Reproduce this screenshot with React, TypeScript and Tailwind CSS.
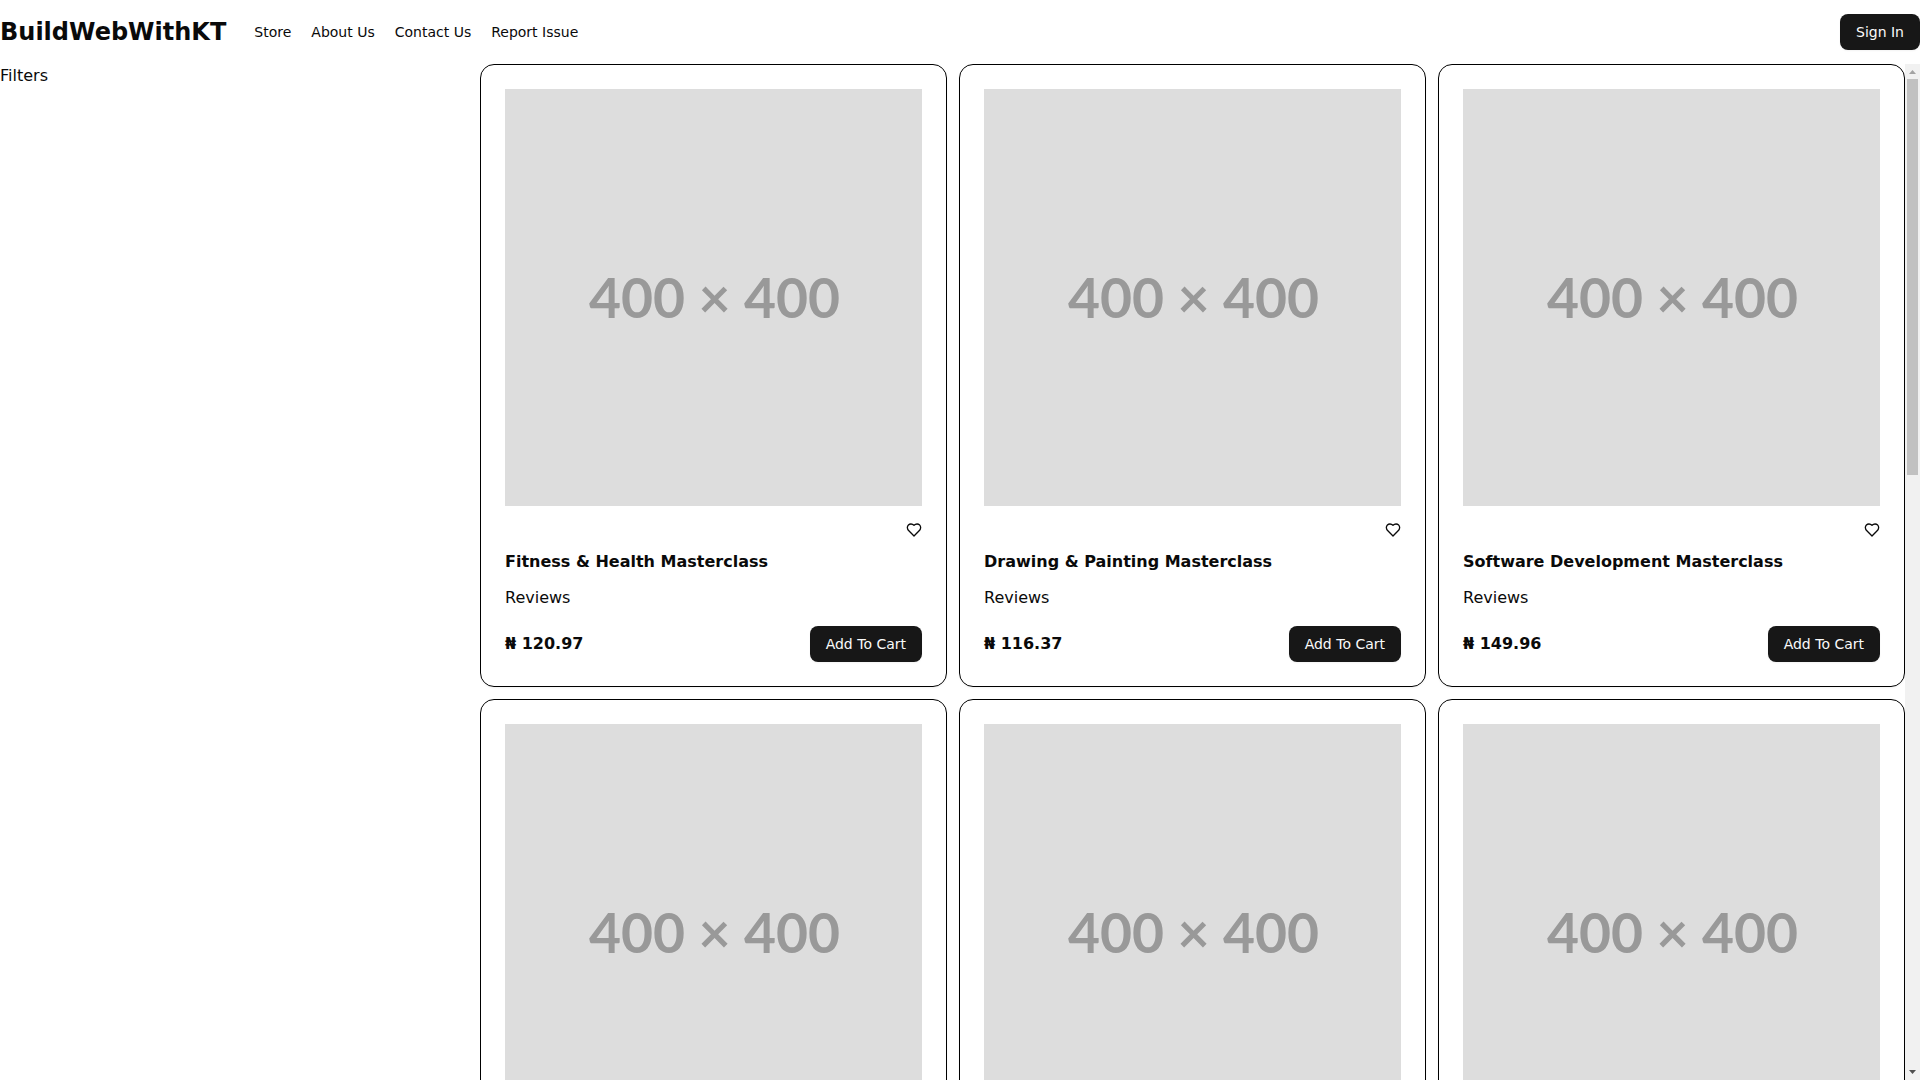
import React, { useState } from 'react';

const navLinks = ['Store', 'About Us', 'Contact Us', 'Report Issue'];

const courses = [
  { id: 1, title: 'Fitness & Health Masterclass', price: '120.97' },
  { id: 2, title: 'Drawing & Painting Masterclass', price: '116.37' },
  { id: 3, title: 'Software Development Masterclass', price: '149.96' },
  { id: 4, title: 'Fitness & Health Masterclass', price: '120.97' },
  { id: 5, title: 'Drawing & Painting Masterclass', price: '116.37' },
  { id: 6, title: 'Software Development Masterclass', price: '149.96' }
];

type Course = (typeof courses)[number];

const PrimaryButton = ({ children }: { children: React.ReactNode }) => (
  <button
    type="button"
    className="h-9 px-4 rounded-lg bg-[#171717] text-sm text-neutral-50 whitespace-nowrap shadow-xs hover:bg-[#171717]/90"
  >
    {children}
  </button>
);

const Placeholder = () => (
  <svg viewBox="0 0 400 400" className="block w-full bg-[#dddddd]" role="img" aria-label="400 × 400">
    <text
      x="201"
      y="220"
      textAnchor="middle"
      className="fill-[#999999] font-['Lato',sans-serif] text-[53px] font-bold"
    >
      400 × 400
    </text>
  </svg>
);

const CourseCard = ({ course }: { course: Course }) => {
  const [liked, setLiked] = useState(false);

  return (
    <article className="rounded-[14px] border border-black p-6 shadow-xs">
      <Placeholder />
      <div className="mt-4 flex justify-end">
        <button type="button" aria-label="Add to wishlist" aria-pressed={liked} onClick={() => setLiked(!liked)}>
          <svg
            viewBox="0 0 24 24"
            className="block size-4"
            fill={liked ? 'currentColor' : 'none'}
            stroke="currentColor"
            strokeWidth="2"
            strokeLinecap="round"
            strokeLinejoin="round"
          >
            <path d="M19 14c1.49-1.46 3-3.21 3-5.5A5.5 5.5 0 0 0 16.5 3c-1.76 0-3 .5-4.5 2-1.5-1.5-2.74-2-4.5-2A5.5 5.5 0 0 0 2 8.5c0 2.3 1.5 4.05 3 5.5l7 7Z" />
          </svg>
        </button>
      </div>
      <h2 className="mt-3 font-bold">{course.title}</h2>
      <p className="mt-3">Reviews</p>
      <div className="mt-4 flex items-center justify-between">
        <p className="font-bold">₦ {course.price}</p>
        <PrimaryButton>Add To Cart</PrimaryButton>
      </div>
    </article>
  );
};

const Scrollbar = () => (
  <div className="flex w-[15px] shrink-0 flex-col items-center bg-[#f1f1f1]" aria-hidden="true">
    <svg viewBox="0 0 15 15" className="block size-[15px]">
      <path d="M4 10h7L7.5 6z" fill="#a3a3a3" />
    </svg>
    <div className="min-h-0 w-full flex-1 px-0.5">
      <div className="h-[40.2%] bg-[#c1c1c1]" />
    </div>
    <svg viewBox="0 0 15 15" className="block size-[15px]">
      <path d="M4 5h7L7.5 9z" fill="#505050" />
    </svg>
  </div>
);

const App = () => {
  return (
    <div className="flex h-screen flex-col bg-white font-['DejaVu_Sans',sans-serif] text-neutral-950">
      <header className="flex h-16 shrink-0 items-center justify-between">
        <div className="flex items-center gap-7">
          <h1 className="text-2xl font-bold">BuildWebWithKT</h1>
          <nav className="flex gap-5 text-sm">
            {navLinks.map(link => (
              <a key={link} href="#" className="hover:underline">
                {link}
              </a>
            ))}
          </nav>
        </div>
        <PrimaryButton>Sign In</PrimaryButton>
      </header>

      <div className="grid min-h-0 flex-1 grid-cols-4">
        <aside>Filters</aside>
        <div className="col-span-3 flex min-h-0">
          <main className="flex-1 overflow-y-auto [scrollbar-width:none]">
            <div className="grid grid-cols-3 gap-3">
              {courses.map(course => (
                <CourseCard key={course.id} course={course} />
              ))}
            </div>
          </main>
          <Scrollbar />
        </div>
      </div>
    </div>
  );
};

export default App;
